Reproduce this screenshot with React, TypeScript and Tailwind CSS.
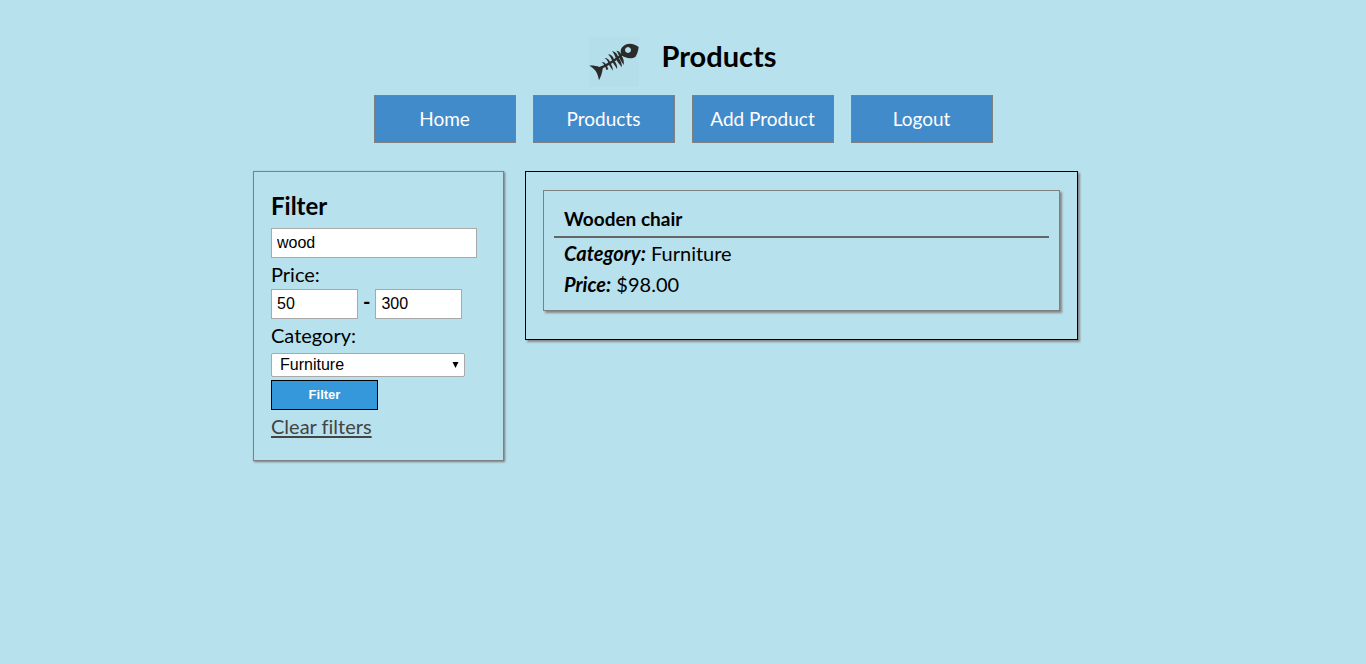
import { useState } from "react";

const navItems = ["Home", "Products", "Add Product", "Logout"];

const products = [{ name: "Wooden chair", category: "Furniture", price: 98 }];

function FishLogo() {
  return (
    <svg className="size-[50px] bg-[#b4dfea]" viewBox="27 21 150 150" fill="#2b2b2b" role="img" aria-label="Fish skeleton">
      <path
        fillRule="evenodd"
        d="M122 65C122 51 134 42 148 41C160 41 169 45 176 51C175 62 171 74 166 81C158 86 145 86 136 82C127 79 122 73 122 65ZM144 51a9 9 0 1 0 .1 0Z"
      />
      <path d="M28 107C38 106 50 108 58 111L68 107L68 118C66 130 62 142 57 151C55 140 52 130 47 123C42 116 35 111 28 107Z" />
      <path d="M62 110C82 101 104 87 127 70L130 76C108 93 86 108 64 117Z" />
      <path d="M65 96C73 96 78 101 81 108L85 118L79 120C77 111 73 102 65 96Z" />
      <path d="M74 84C84 84 90 92 93 102C97 109 99 116 98 122C94 113 88 108 86 101C83 93 80 88 74 84Z" />
      <path d="M84 73C95 73 101 83 104 93C109 101 113 109 111 117C106 108 100 102 97 94C94 85 90 78 84 73Z" />
      <path d="M96 64C108 65 113 75 116 84C122 91 127 101 125 112C119 102 112 97 108 87C105 78 102 70 96 64Z" />
      <path d="M109 62C119 63 123 70 125 77C130 84 133 94 131 105C126 97 120 90 118 81C116 73 113 67 109 62Z" />
    </svg>
  );
}

export default function App() {
  const [name, setName] = useState("wood");
  const [min, setMin] = useState("50");
  const [max, setMax] = useState("300");
  const [category, setCategory] = useState("Furniture");

  const field =
    "block h-[30px] border border-[#a9a9a9] bg-white px-[5px] font-['Liberation_Sans',Arial,sans-serif] text-base text-black";

  return (
    <div className="min-h-screen bg-[#b7e1ed] px-4 pt-[37px] font-[Lato,Calibri,sans-serif] text-xl text-black [font-variant-ligatures:none]">
      <header className="flex flex-col items-center">
        <div className="flex gap-[22px]">
          <FishLogo />
          <h1 className="text-[29px] leading-[38px] font-bold">Products</h1>
        </div>
        <nav className="mt-2 flex flex-wrap justify-center gap-[17px]">
          {navItems.map((item) => (
            <a
              key={item}
              href="#"
              className="flex h-12 w-[142px] items-center justify-center border border-[#808080] bg-[#428bca] text-[19px] text-white"
            >
              {item}
            </a>
          ))}
        </nav>
      </header>

      <div className="mx-auto mt-7 flex max-w-[860px] items-start gap-[21px]">
        <form
          className="w-[251px] shrink-0 border border-[#808080] px-[17px] pt-[18px] pb-[18px] shadow-[1px_1px_2px_#777]"
          onSubmit={(e) => e.preventDefault()}
        >
          <h2 className="text-2xl leading-8 font-bold">Filter</h2>
          <input
            aria-label="Product name"
            className={`${field} mt-[6px] w-[206px]`}
            value={name}
            onChange={(e) => setName(e.target.value)}
          />
          <label htmlFor="min" className="block pt-[2px] leading-[29px]">
            Price:
          </label>
          <div className="flex gap-[5px]">
            <input id="min" className={`${field} w-[87px]`} value={min} onChange={(e) => setMin(e.target.value)} />
            <span className="leading-6 font-bold">-</span>
            <input
              aria-label="Maximum price"
              className={`${field} w-[87px]`}
              value={max}
              onChange={(e) => setMax(e.target.value)}
            />
          </div>
          <label htmlFor="category" className="block pb-[2px] leading-8">
            Category:
          </label>
          <div className="relative w-[194px]">
            <select
              id="category"
              className="block h-6 w-full appearance-none rounded-xs border border-[#a9a9a9] bg-white pl-2 font-['Liberation_Sans',Arial,sans-serif] text-base leading-[22px] text-black"
              value={category}
              onChange={(e) => setCategory(e.target.value)}
            >
              <option>Furniture</option>
            </select>
            <svg className="pointer-events-none absolute top-[9px] right-[6px] h-[6px] w-[7px]" viewBox="0 0 7 6">
              <path d="M0.5 0H6.5L3.5 6Z" />
            </svg>
          </div>
          <button className="mt-[3px] block h-[30px] w-[107px] border border-black bg-[#3498db] font-['Liberation_Sans',Arial,sans-serif] text-[13px] font-bold text-white">
            Filter
          </button>
          <a href="#" className="block w-fit leading-8 text-[#444] underline decoration-2 underline-offset-2">
            Clear filters
          </a>
        </form>

        <main className="mr-[35px] flex-1 border border-black px-[17px] pt-[18px] pb-7 shadow-[2px_2px_2px_#888]">
          {products.map((p) => (
            <article
              key={p.name}
              className="border border-[#808080] px-[10px] pt-[13px] pb-[10px] shadow-[2px_2px_2px_#888]"
            >
              <h3 className="border-b-2 border-[#666] px-[10px] pb-[2px] text-[19px] leading-[30px] font-bold">{p.name}</h3>
              <p className="px-[10px] leading-[31px]">
                <strong className="italic">Category:</strong> {p.category}
              </p>
              <p className="px-[10px] leading-[31px]">
                <strong className="italic">Price:</strong> ${p.price.toFixed(2)}
              </p>
            </article>
          ))}
        </main>
      </div>
    </div>
  );
}
